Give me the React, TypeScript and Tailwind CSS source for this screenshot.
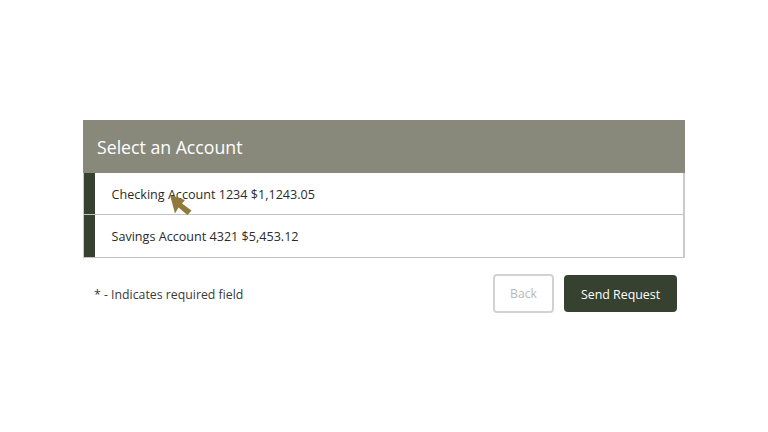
const accounts = [
  { label: 'Checking Account 1234 $1,1243.05', height: 'h-[42px]', text: 'pt-[3px]' },
  { label: 'Savings Account 4321 $5,453.12', height: 'h-[43px]', text: 'pt-[3px]' },
]

export default function App() {
  return (
    <div className="relative h-[432px] w-[768px] overflow-hidden bg-white pl-[83px] pt-[120px] font-['Open_Sans',sans-serif]">
      <div className="w-[602px]">
        <div className="flex h-[53px] items-center bg-[#89897b] px-[14px] pt-[1px] text-[17.7px] text-white">
          Select an Account
        </div>
        <div className="border-l border-r-2 border-[#cacaca]">
          {accounts.map((account) => (
            <div
              key={account.label}
              className={`flex ${account.height} border-b-[1.5px] border-[#c0c1c3]`}
            >
              <div className="w-[11px] bg-[#36412f]" />
              <div className={`flex flex-1 items-center ${account.text} pl-[16.5px] text-[12.6px] text-[#2b2b2b]`}>
                {account.label}
              </div>
            </div>
          ))}
        </div>
        <div className="mt-[16px] flex items-center justify-between pl-[11px] pr-[8px]">
          <span className="pt-[3px] text-[12.3px] text-[#3a3a3a]">* - Indicates required field</span>
          <div className="flex items-center gap-[10px]">
            <button className="h-[39px] w-[61px] rounded-[4px] border-2 border-[#d2d2d2] bg-white pt-[2px] text-[12.2px] text-[#b9b9b6]">
              Back
            </button>
            <button className="h-[37px] w-[113px] rounded-[4px] bg-[#36412f] pt-[3px] text-[12.4px] text-white">
              Send Request
            </button>
          </div>
        </div>
      </div>

      {/* Cursor */}
      <svg className="absolute left-[169px] top-[195px]" width="24" height="22" viewBox="0 0 24 22">
        <path d="M1 0 L16 5 L13 8.5 L22.5 15.5 L18.5 20 L9.5 12.5 L6 18.5 Z" fill="#8f7a3c" />
      </svg>
    </div>
  )
}
